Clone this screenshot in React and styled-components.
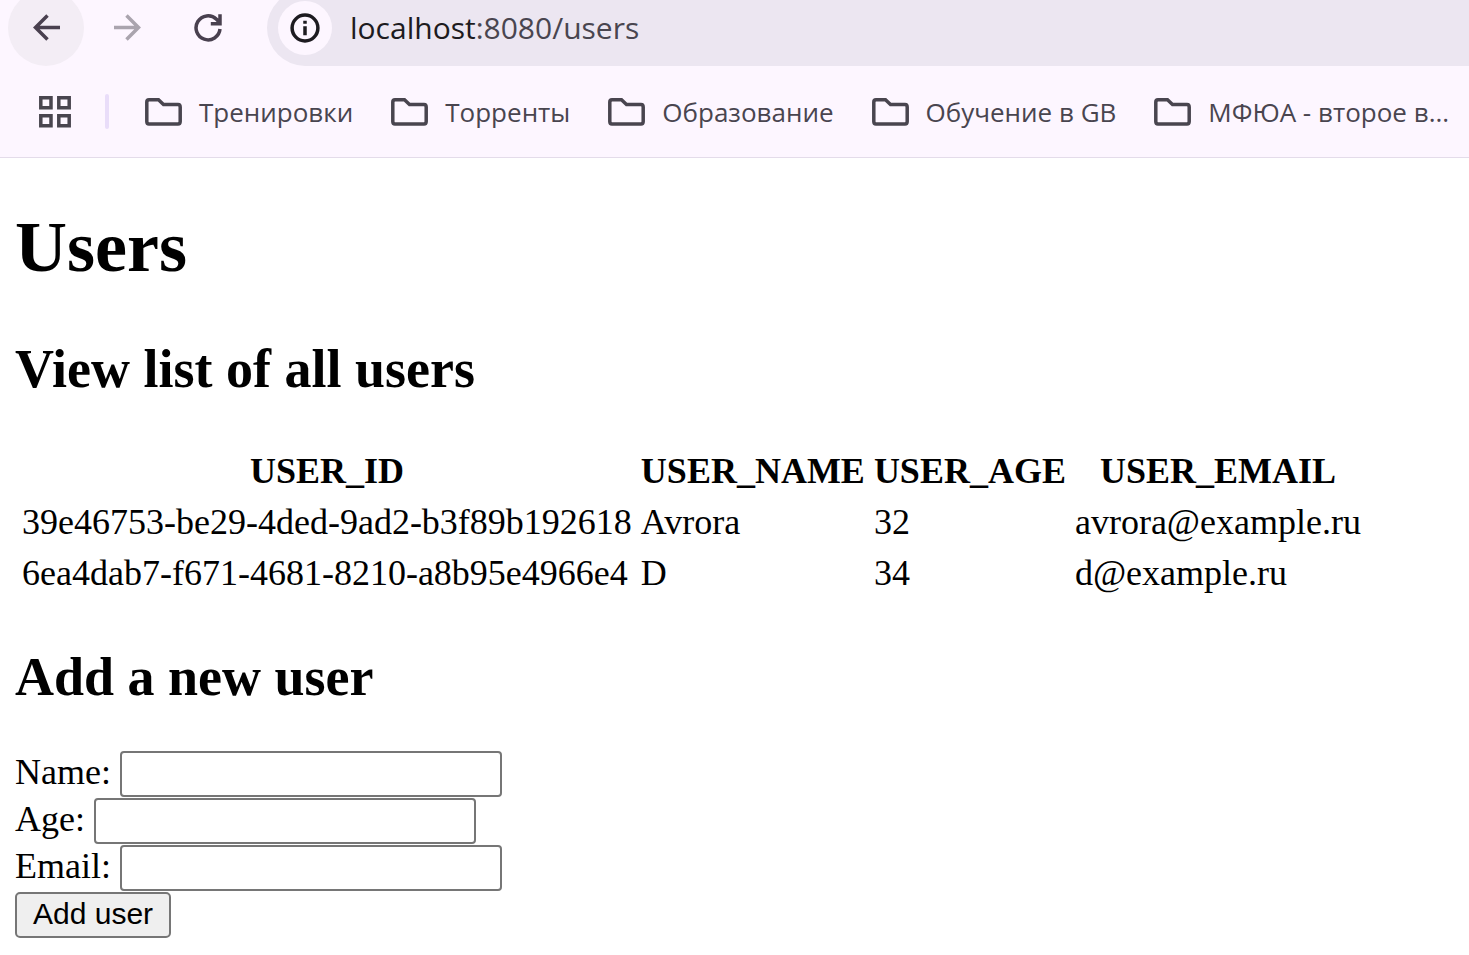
import React from 'react';
import styled, { createGlobalStyle } from 'styled-components';

const GlobalStyle = createGlobalStyle`
  *, *::before, *::after { box-sizing: border-box; }
  body {
    margin: 0;
    background: #fff;
    color: #000;
    font-family: 'Liberation Serif', 'Times New Roman', serif;
    font-size: 36px;
    line-height: 42px;
  }
`;

const Chrome = styled.header`
  overflow: hidden;
  background: #fdf6ff;
  border-bottom: 1px solid #e4dcea;
  font-family: 'Open Sans', 'Noto Sans', sans-serif;
  color: #49454f;
`;

const Toolbar = styled.div`
  display: flex;
  align-items: center;
  height: 76px;
  margin-top: -10px;
  padding-left: 8px;
`;

const NavButton = styled.button`
  display: flex;
  flex: none;
  align-items: center;
  justify-content: center;
  width: 76px;
  height: 76px;
  margin-right: 5px;
  padding: 0;
  border: 0;
  border-radius: 38px;
  background: ${(p) => (p.$active ? '#f3edf5' : 'transparent')};
  color: ${(p) => (p.disabled ? '#aaa4ae' : '#49404f')};
`;

const AddressBar = styled.div`
  display: flex;
  flex: 1;
  align-items: center;
  gap: 18px;
  min-width: 0;
  height: 76px;
  margin-left: 16px;
  padding-left: 11px;
  border-radius: 38px 0 0 38px;
  background: #ece6f1;
`;

const SiteInfo = styled.button`
  display: flex;
  flex: none;
  align-items: center;
  justify-content: center;
  width: 54px;
  height: 54px;
  padding: 0;
  border: 0;
  border-radius: 50%;
  background: #fdf6ff;
  color: #1d1b20;
`;

const Address = styled.span`
  font-size: 30px;
  line-height: 40px;
  white-space: nowrap;
`;

const Host = styled.span`
  color: #1d1b20;
`;

const Bookmarks = styled.nav`
  display: flex;
  align-items: center;
  height: 91px;
  padding-left: 38px;
  white-space: nowrap;
`;

const AppsButton = styled.button`
  display: flex;
  flex: none;
  padding: 0;
  border: 0;
  background: none;
  color: #49454f;
`;

const Divider = styled.span`
  flex: none;
  width: 4px;
  height: 35px;
  margin: 0 36px 0 33px;
  border-radius: 2px;
  background: #e9ddf9;
`;

const BookmarkList = styled.div`
  display: flex;
  gap: 38px;
`;

const Bookmark = styled.a`
  display: flex;
  align-items: center;
  gap: 17px;
  color: inherit;
  font-size: 26px;
  line-height: 34px;
  text-decoration: none;
`;

const Icon = styled.svg`
  display: block;
  flex: none;
  fill: none;
  stroke: currentColor;
  stroke-width: 3.5;
`;

const Page = styled.main`
  padding: 48px 15px 18px;
`;

const Title = styled.h1`
  margin: 0 0 51px;
  font-size: 72px;
  line-height: 82px;
`;

const Heading = styled.h2`
  margin: 46px 0 44px;
  font-size: 54px;
  line-height: 60px;
`;

const Table = styled.table`
  border-collapse: separate;
  border-spacing: 5px;

  th, td { padding: 2px; white-space: nowrap; }
  td { text-align: left; }
`;

const Form = styled.form`
  display: flex;
  flex-direction: column;
  align-items: flex-start;
  gap: 1px;
`;

const Field = styled.div`
  display: flex;
  align-items: flex-start;
  gap: 9px;
`;

const Input = styled.input`
  width: 382px;
  height: 46px;
  padding: 2px 5px;
  border: 2px solid #767676;
  border-radius: 4px;
  background: #fff;
  font: 30px/36px 'Liberation Sans', Arial, sans-serif;
`;

const Submit = styled.button`
  height: 46px;
  padding: 0 16px 2px;
  border: 2px solid #767676;
  border-radius: 5px;
  background: #efefef;
  color: #000;
  font: 30px/36px 'Liberation Sans', Arial, sans-serif;
`;

const FolderIcon = () => (
  <Icon width="37" height="28" viewBox="0 0 37 28">
    <path d="M4 1.8H13.500L18.500 6.500H33Q35.200 6.500 35.200 9V23.500Q35.200 26 33 26H4Q1.800 26 1.800 23.500V4Q1.800 1.800 4 1.800Z" />
  </Icon>
);

const folders = ['Тренировки', 'Торренты', 'Образование', 'Обучение в GB', 'МФЮА - второе в...'];

const columns = ['USER_ID', 'USER_NAME', 'USER_AGE', 'USER_EMAIL'];

const users = [
  ['39e46753-be29-4ded-9ad2-b3f89b192618', 'Avrora', '32', 'avrora@example.ru'],
  ['6ea4dab7-f671-4681-8210-a8b95e4966e4', 'D', '34', 'd@example.ru'],
];

const fields = [
  { id: 'name', label: 'Name:' },
  { id: 'age', label: 'Age:' },
  { id: 'email', label: 'Email:' },
];

export default function App() {
  return (
    <>
      <GlobalStyle />
      <Chrome>
        <Toolbar>
          <NavButton $active aria-label="Back">
            <Icon width="28" height="28" viewBox="0 0 28 28">
              <path d="M28 13.500H4M15.500 1.500L3.500 13.500L15.500 25.500" />
            </Icon>
          </NavButton>
          <NavButton disabled aria-label="Forward">
            <Icon width="28" height="28" viewBox="0 0 28 28">
              <path d="M1 13.500H25M13.500 1.500L25.500 13.500L13.500 25.500" />
            </Icon>
          </NavButton>
          <NavButton aria-label="Reload">
            <Icon width="28" height="28" viewBox="0 0 28 28">
              <path d="M26 15A12 12 0 1 1 22.500 5.300L25.500 8.500M26 0.200V9.800H16.800" />
            </Icon>
          </NavButton>
          <AddressBar>
            <SiteInfo aria-label="Site information">
              <Icon width="30" height="30" viewBox="0 0 30 30">
                <circle cx="15" cy="15" r="12.900" />
                <path d="M15 13.200V22.200M15 7.800V10.800" />
              </Icon>
            </SiteInfo>
            <Address><Host>localhost</Host>:8080/users</Address>
          </AddressBar>
        </Toolbar>
        <Bookmarks>
          <AppsButton aria-label="Apps">
            <Icon width="34" height="32" viewBox="0 0 34 32">
              <path d="M2.800 1.800H13V11.800H2.800ZM20.800 1.800H31.200V11.800H20.800ZM2.800 19.800H13V29.800H2.800ZM20.800 19.800H31.200V29.800H20.800Z" />
            </Icon>
          </AppsButton>
          <Divider />
          <BookmarkList>
            {folders.map((name) => (
              <Bookmark key={name} href="#">
                <FolderIcon />
                {name}
              </Bookmark>
            ))}
          </BookmarkList>
        </Bookmarks>
      </Chrome>
      <Page>
        <Title>Users</Title>
        <Heading>View list of all users</Heading>
        <Table>
          <thead>
            <tr>{columns.map((c) => <th key={c} scope="col">{c}</th>)}</tr>
          </thead>
          <tbody>
            {users.map((row) => (
              <tr key={row[0]}>{row.map((v) => <td key={v}>{v}</td>)}</tr>
            ))}
          </tbody>
        </Table>
        <Heading>Add a new user</Heading>
        <Form onSubmit={(e) => e.preventDefault()}>
          {fields.map((f) => (
            <Field key={f.id}>
              <label htmlFor={f.id}>{f.label}</label>
              <Input id={f.id} name={f.id} type="text" />
            </Field>
          ))}
          <Submit type="submit">Add user</Submit>
        </Form>
      </Page>
    </>
  );
}
